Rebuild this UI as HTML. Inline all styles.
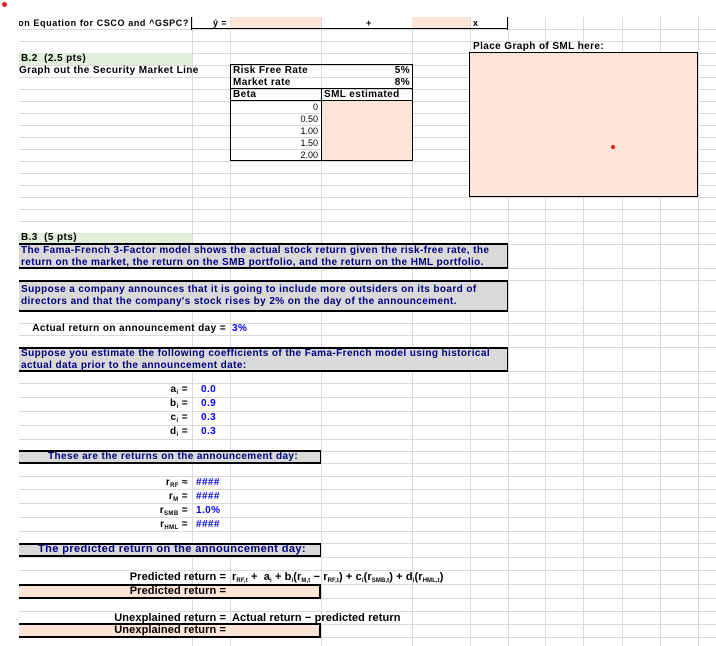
<!DOCTYPE html>
<html><head><meta charset="utf-8"><style>
*{margin:0;padding:0;box-sizing:border-box}
body{width:716px;height:646px;position:relative;background:#fff;overflow:hidden;font-family:"Liberation Sans",Arial,sans-serif;font-size:10px;font-weight:bold;color:#000;letter-spacing:0.4px}
.h{position:absolute;height:1px;background:#dadada}
.v{position:absolute;width:1px;background:#dadada}
.a{position:absolute;white-space:nowrap;line-height:12px}
.r{text-align:right}
.blue{color:#0000ff}
.navy{color:#000080}
.box{position:absolute;background:#d9d9d9;border-top:2px solid #000;border-bottom:2px solid #000;border-right:1px solid #000}
.pe{position:absolute;background:#fce4d6}
sub{font-size:6px;vertical-align:-2px}
</style></head><body>
<div id="grid"></div>
<script>
var ys=[29,41,53,65,77,89,101,113,125,137,149,161,173,185,197,209,221,233,244,268,280,311,323,335,347,371,383,397,411,425,439,451,463,476,489,503,517,531,543,557,570,584,598,611,624,637];
var xs=[192,230,321,412,470,508,545,583,622,660,698];
var g='';
ys.forEach(function(y){g+='<div class="h" style="left:19px;width:697px;top:'+y+'px"></div>';});
xs.forEach(function(x){g+='<div class="v" style="left:'+x+'px;top:17px;height:629px"></div>';});
document.getElementById('grid').innerHTML=g;
</script>
<div style="position:absolute;left:2px;top:2px;width:5px;height:5px;border-radius:50%;background:#e52020"></div>

<div class="pe" style="left:230px;top:17px;width:91px;height:12px"></div>
<div class="pe" style="left:412px;top:17px;width:58px;height:12px"></div>
<div style="position:absolute;left:191px;top:17px;width:1px;height:13px;background:#000"></div>
<div style="position:absolute;left:507px;top:17px;width:1px;height:13px;background:#000"></div>
<div style="position:absolute;left:191px;top:28px;width:317px;height:1px;background:#000"></div>
<div style="position:absolute;left:19px;top:17px;width:170px;height:12px;overflow:hidden">
<div class="a r" style="right:0;top:0;font-size:9px;letter-spacing:0.6px">Regression Equation for CSCO and ^GSPC?</div></div>
<div class="a" style="left:213px;top:17px;font-size:9px">ŷ =</div>
<div class="a" style="left:366px;top:17px;font-size:9px">+</div>
<div class="a" style="left:473px;top:17px;font-size:9px">x</div>

<div style="position:absolute;left:19px;top:53px;width:173px;height:12px;background:#e2efda"></div>
<div class="a" style="left:21px;top:53px">B.2&nbsp; (2.5 pts)</div>
<div class="a" style="left:19px;top:65px">Graph out the Security Market Line</div>

<div class="pe" style="left:321px;top:101px;width:91px;height:60px"></div>
<div style="position:absolute;left:230px;top:64px;width:183px;height:97px;border:1px solid #000"></div>
<div style="position:absolute;left:230px;top:88px;width:183px;height:13px;border-top:1px solid #000;border-bottom:1px solid #000"></div>
<div style="position:absolute;left:321px;top:88px;width:1px;height:73px;background:#000"></div>
<div class="a" style="left:233px;top:65px">Risk Free Rate</div>
<div class="a" style="left:233px;top:77px">Market rate</div>
<div class="a" style="left:233px;top:89px">Beta</div>
<div class="a" style="left:324px;top:89px">SML estimated</div>
<div class="a r" style="left:330px;top:65px;width:80px">5%</div>
<div class="a r" style="left:330px;top:77px;width:80px">8%</div>
<div class="a r" style="left:230px;top:101px;width:88px;font-weight:normal;font-size:9px;letter-spacing:0">0</div>
<div class="a r" style="left:230px;top:113px;width:88px;font-weight:normal;font-size:9px;letter-spacing:0">0.50</div>
<div class="a r" style="left:230px;top:125px;width:88px;font-weight:normal;font-size:9px;letter-spacing:0">1.00</div>
<div class="a r" style="left:230px;top:137px;width:88px;font-weight:normal;font-size:9px;letter-spacing:0">1.50</div>
<div class="a r" style="left:230px;top:149px;width:88px;font-weight:normal;font-size:9px;letter-spacing:0">2.00</div>

<div class="a" style="left:473px;top:41px">Place Graph of SML here:</div>
<div style="position:absolute;left:469px;top:52px;width:229px;height:145px;background:#fce4d6;border:1px solid #000"></div>
<div style="position:absolute;left:611px;top:145px;width:4px;height:4px;border-radius:50%;background:#e52020"></div>

<div style="position:absolute;left:19px;top:233px;width:173px;height:11px;background:#e2efda"></div>
<div class="a" style="left:21px;top:232px">B.3&nbsp; (5 pts)</div>
<div class="box" style="left:19px;top:243px;width:489px;height:26px"></div>
<div class="a navy" style="left:21px;top:245px">The Fama-French 3-Factor model shows the actual stock return given the risk-free rate, the</div>
<div class="a navy" style="left:21px;top:257px">return on the market, the return on the SMB portfolio, and the return on the HML portfolio.</div>
<div class="box" style="left:19px;top:280px;width:489px;height:32px"></div>
<div class="a navy" style="left:21px;top:284px">Suppose a company announces that it is going to include more outsiders on its board of</div>
<div class="a navy" style="left:21px;top:296px">directors and that the company's stock rises by 2% on the day of the announcement.</div>
<div class="a r" style="left:19px;top:323px;width:207px">Actual return on announcement day =</div>
<div class="a blue" style="left:232px;top:323px">3%</div>
<div class="box" style="left:19px;top:347px;width:489px;height:25px"></div>
<div class="a navy" style="left:21px;top:348px">Suppose you estimate the following coefficients of the Fama-French model using historical</div>
<div class="a navy" style="left:21px;top:360px">actual data prior to the announcement date:</div>

<div class="a r" style="left:19px;top:384px;width:169px">a<sub>i</sub> =</div><div class="a blue" style="left:201px;top:384px">0.0</div>
<div class="a r" style="left:19px;top:398px;width:169px">b<sub>i</sub> =</div><div class="a blue" style="left:201px;top:398px">0.9</div>
<div class="a r" style="left:19px;top:412px;width:169px">c<sub>i</sub> =</div><div class="a blue" style="left:201px;top:412px">0.3</div>
<div class="a r" style="left:19px;top:426px;width:169px">d<sub>i</sub> =</div><div class="a blue" style="left:201px;top:426px">0.3</div>

<div class="box" style="left:19px;top:450px;width:302px;height:14px"></div>
<div class="a navy" style="left:48px;top:451px">These are the returns on the announcement day:</div>

<div class="a r" style="left:19px;top:477px;width:169px">r<sub>RF</sub> ≈</div><div class="a blue" style="left:196px;top:477px">####</div>
<div class="a r" style="left:19px;top:491px;width:169px">r<sub>M</sub> =</div><div class="a blue" style="left:196px;top:491px">####</div>
<div class="a r" style="left:19px;top:505px;width:169px">r<sub>SMB</sub> =</div><div class="a blue" style="left:196px;top:505px">1.0%</div>
<div class="a r" style="left:19px;top:519px;width:169px">r<sub>HML</sub> =</div><div class="a blue" style="left:196px;top:519px">####</div>

<div class="box" style="left:19px;top:543px;width:302px;height:14px"></div>
<div class="a navy" style="left:38px;top:543px;font-size:11px">The predicted return on the announcement day:</div>

<div class="a r" style="left:19px;top:571px;width:207px;font-size:11px;letter-spacing:0.1px">Predicted return =</div>
<div class="a" style="left:232px;top:571px;font-size:11px;letter-spacing:0.1px">r<sub>RF,t</sub> +&nbsp; a<sub>i</sub> + b<sub>i</sub>(r<sub>M,t</sub> − r<sub>RF,t</sub>) + c<sub>i</sub>(r<sub>SMB,t</sub>) + d<sub>i</sub>(r<sub>HML,t</sub>)</div>
<div class="pe" style="left:19px;top:584px;width:302px;height:15px;border-top:2px solid #000;border-bottom:2px solid #000;border-right:2px solid #000"></div>
<div class="a r" style="left:19px;top:585px;width:207px;font-size:11px;letter-spacing:0.1px">Predicted return =</div>

<div class="a r" style="left:19px;top:612px;width:207px;font-size:11px;letter-spacing:0.1px">Unexplained return =</div>
<div class="a" style="left:232px;top:612px;font-size:11px;letter-spacing:0.1px">Actual return − predicted return</div>
<div class="pe" style="left:19px;top:623px;width:302px;height:15px;border-top:2px solid #000;border-bottom:2px solid #000;border-right:2px solid #000"></div>
<div class="a r" style="left:19px;top:624px;width:207px;font-size:11px;letter-spacing:0.1px">Unexplained return =</div>
</body></html>
